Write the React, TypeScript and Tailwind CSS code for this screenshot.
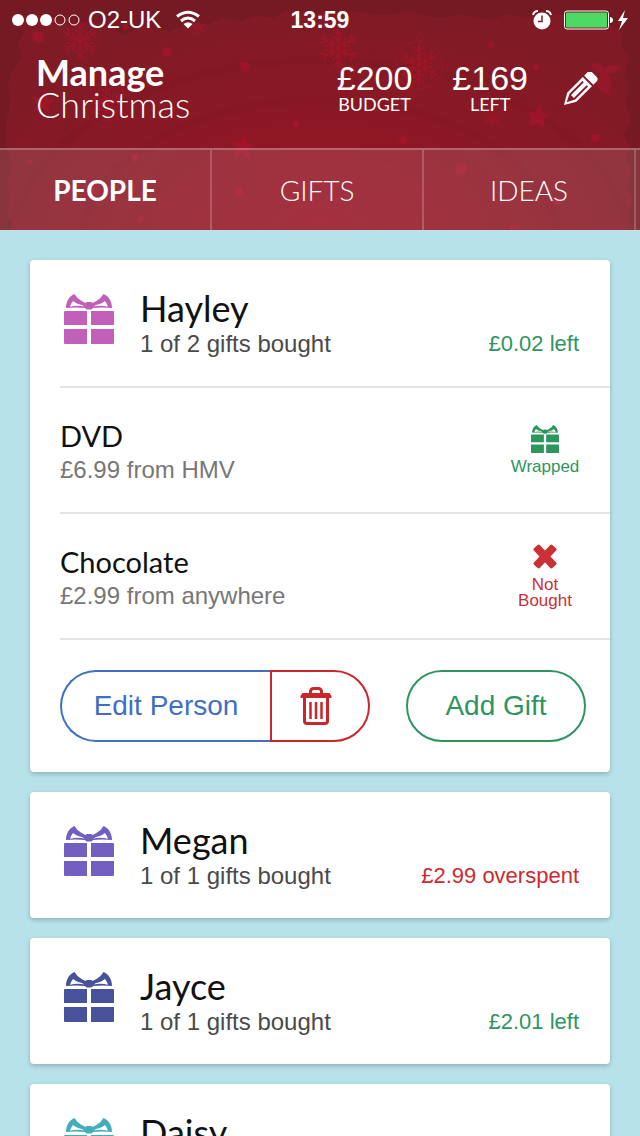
import type { ReactNode } from "react";
import { clsx } from "clsx";

type Gift = {
  title: string;
  detail: string;
  wrapped: boolean;
};

type Person = {
  name: string;
  summary: string;
  balance: string;
  overspent?: boolean;
  color: string;
  gifts?: Gift[];
};

const people: Person[] = [
  {
    name: "Hayley",
    summary: "1 of 2 gifts bought",
    balance: "£0.02 left",
    color: "text-[#c15fb9]",
    gifts: [
      { title: "DVD", detail: "£6.99 from HMV", wrapped: true },
      { title: "Chocolate", detail: "£2.99 from anywhere", wrapped: false }
    ]
  },
  {
    name: "Megan",
    summary: "1 of 1 gifts bought",
    balance: "£2.99 overspent",
    overspent: true,
    color: "text-[#735fc1]"
  },
  { name: "Jayce", summary: "1 of 1 gifts bought", balance: "£2.01 left", color: "text-[#47529b]" },
  { name: "Daisy", summary: "1 of 1 gifts bought", balance: "£4.00 left", color: "text-[#44adbb]" }
];

const tabs = ["PEOPLE", "GIFTS", "IDEAS"];

const dots = [
  [38, 37, 6], [167, 52, 5], [245, 67, 5], [296, 124, 3], [126, 27, 3], [491, 45, 3],
  [536, 67, 3], [403, 140, 4], [595, 138, 4], [30, 162, 2], [135, 157, 4], [94, 190, 6],
  [239, 192, 4], [141, 219, 3], [461, 169, 6], [389, 168, 2], [557, 201, 4], [515, 230, 6]
];

const flakes = [
  [80, 41, 19], [338, 48, 20], [198, 28, 8], [492, 118, 8], [106, 105, 18], [419, 65, 20], [55, 236, 10]
];

const stars = [[243, 147], [538, 117], [43, 102]];

function GiftIcon({ className }: { className?: string }) {
  return (
    <svg viewBox="0 0 50 50" fill="currentColor" className={className} aria-hidden="true">
      <path d="M1 17h22v14H0V18a1 1 0 0 1 1-1zM27 17h22a1 1 0 0 1 1 1v13H27zM0 35h23v15H1a1 1 0 0 1-1-1zM27 35h23v14a1 1 0 0 1-1 1H27z" />
      <path
        fillRule="evenodd"
        d="M2 14C2 8 5 2 10.500 0L13.500 4Q17 7 21.500 9 22 8 23.500 8h3Q28 8 28.500 9 33 7 36.500 4L39.500 0C45 2 48 8 48 14Q38 13 29 14 28 15.500 26.500 15.500h-3Q22 15.500 21 14 12 13 2 14zM9 7Q7 9.500 6 12.800 13 11 20.500 12.500 18 10.500 15 10.200 12 9.500 9 7zM41 7Q38 9.500 35 10.200 32 10.500 29.500 12.500 37 11 44 12.800 43 9.500 41 7z"
      />
    </svg>
  );
}

function CrossIcon() {
  return (
    <svg viewBox="0 0 28 28" fill="currentColor" className="size-7" aria-hidden="true">
      <rect x="0.500" y="9.500" width="27" height="8" rx="1.500" transform="rotate(47 14 13.500)" />
      <rect x="0.500" y="9.500" width="27" height="8" rx="1.500" transform="rotate(-47 14 13.500)" />
    </svg>
  );
}

function TrashIcon() {
  return (
    <svg viewBox="0 0 32 38" fill="none" stroke="currentColor" className="h-[38px] w-8" aria-hidden="true">
      <path d="M10.500 7V4.500a3 3 0 0 1 3-3h5a3 3 0 0 1 3 3V7" strokeWidth="3" />
      <path d="M2.500 6h27l2 3v2H.500V9z" fill="currentColor" stroke="none" />
      <path d="M4.500 10v24a2.500 2.500 0 0 0 2.500 2.500h18a2.500 2.500 0 0 0 2.500-2.500V10" strokeWidth="3" />
      <path d="M10.500 15v17M16 15v17M21.500 15v17" strokeWidth="2.500" />
    </svg>
  );
}

function PencilIcon() {
  return (
    <svg viewBox="0 0 34 34" className="size-[34px]" aria-hidden="true">
      <g transform="translate(0 33) rotate(-45)">
        <path d="M0 0 11-6.500H33V6.500H11z" fill="#fff" />
        <path d="M35-6.500H39Q43-6.500 43-3V3Q43 6.500 39 6.500H35z" fill="#fff" />
        <path d="M30-3H12L6 0 12 3H30" fill="none" stroke="#841924" strokeWidth="2" />
        <path d="M6.500 0 12-3V3z" fill="#841924" />
      </g>
    </svg>
  );
}

// Festive backdrop behind the status bar, title and tabs
function Backdrop() {
  return (
    <svg
      viewBox="0 0 640 230"
      preserveAspectRatio="xMidYMid slice"
      className="absolute inset-0 size-full"
      aria-hidden="true"
    >
      <path
        d="M0 0H640V230H632L628 214 633 200 627 186 632 170 626 158 630 146 624 134 631 120 626 104 629 88 624 74 630 56 620 44 622 32 604 22 580 20 560 14 530 18 508 14 490 20 462 14 440 18 410 12 380 15 350 11 320 13 290 10 272 18 260 15 240 21 222 18 208 24 190 22 170 32 160 28 140 27 122 36 112 26 90 21 70 24 50 16 30 14 16 22 24 32 18 42 22 56 14 68 8 84 10 104 6 122 6 146 12 164 8 180 9 200 7 214 12 222 10 230H0z"
        fill="#641720"
        fillOpacity="0.38"
      />
      <g fill="none" stroke="#4d0d16" strokeOpacity="0.03" strokeWidth="8">
        <ellipse cx="320" cy="250" rx="240" ry="150" />
        <ellipse cx="320" cy="250" rx="310" ry="190" />
      </g>
      <g fill="#b3132d" fillOpacity="0.55">
        {dots.map(([x, y, r]) => (
          <circle key={`${x}-${y}`} cx={x} cy={y} r={r} />
        ))}
        {stars.map(([x, y]) => (
          <path
            key={`${x}-${y}`}
            transform={`translate(${x} ${y}) rotate(8)`}
            d="M0-13 4-4 12-4 6 2 8 11 0 6-8 11-6 2-12-4-4-4z"
          />
        ))}
        <path
          d="M591 64Q599 61 605 68 611 61 621 68 617 74 608 73 612 84 611 95 604 97 598 87L595 80Q602 77 600 73 593 72 591 64z"
          fillOpacity="0.4"
        />
      </g>
      <g fill="none" stroke="#b3132d" strokeOpacity="0.45">
        {flakes.map(([x, y, r]) => (
          <g key={`${x}-${y}`} transform={`translate(${x} ${y}) scale(${r / 20})`} strokeWidth="2">
            {[0, 60, 120, 180, 240, 300].map((angle) => (
              <path
                key={angle}
                transform={`rotate(${angle})`}
                d="M0 0V-20M-5-18 0-13 5-18M-5-12 0-7 5-12M-3-5 0-8 3-5"
              />
            ))}
          </g>
        ))}
        <circle cx="106" cy="105" r="22" />
        <circle cx="419" cy="65" r="24" />
        <circle cx="420" cy="38" r="3" />
      </g>
    </svg>
  );
}

function StatusBar() {
  return (
    <div className="relative grid h-10 grid-cols-3 items-center px-3">
      <div className="flex items-center">
        <svg viewBox="0 0 68 12" className="mr-2 h-3 w-[68px]" aria-hidden="true">
          <g fill="#fff">
            <circle cx="6" cy="6" r="6" />
            <circle cx="20" cy="6" r="6" />
            <circle cx="34" cy="6" r="6" />
          </g>
          <g fill="none" stroke="#fff">
            <circle cx="48" cy="6" r="5" />
            <circle cx="62" cy="6" r="5" />
          </g>
        </svg>
        <span className="text-2xl">O2-UK</span>
        <svg viewBox="0 0 26 20" className="ml-[14px] h-5 w-[26px]" aria-hidden="true">
          <path d="M2 6.500Q13-2 24 6.500M6 11Q13 5 20 11" fill="none" stroke="#fff" strokeWidth="3" />
          <path d="M8.500 14Q13 10.500 17.500 14L13 18.500z" fill="#fff" />
        </svg>
      </div>
      <span className="text-center text-[23px] font-bold">13:59</span>
      <div className="flex items-center justify-end">
        <svg viewBox="0 0 20 20" className="mr-3 size-5" aria-hidden="true">
          <circle cx="10" cy="11" r="8.500" fill="#fff" />
          <path d="M1 5Q2 1 6 1M19 5Q18 1 14 1" fill="none" stroke="#fff" strokeWidth="2" />
          <path d="M10 5.500V11.500H6" fill="none" stroke="#7d1a24" strokeWidth="1.500" />
        </svg>
        <svg viewBox="0 0 64 20" className="h-5 w-16" aria-hidden="true">
          <rect x=".500" y="1" width="44" height="18" rx="2.500" fill="none" stroke="#fff" />
          <rect x="2" y="2.500" width="41" height="15" rx="1" fill="#4cd964" />
          <path d="M46 7q3 .500 3 3t-3 3z" fill="#fff" />
          <path d="M61 0 54 11h4l-3 9 9-12h-5z" fill="#fff" />
        </svg>
      </div>
    </div>
  );
}

function Stat({ value, label }: { value: string; label: string }) {
  return (
    <div className="flex flex-col items-center">
      <span className="text-[34px] leading-9">{value}</span>
      <span className="font-['Lato',sans-serif] text-lg leading-4">{label}</span>
    </div>
  );
}

function GiftRow({ gift }: { gift: Gift }) {
  return (
    <li className="ml-[30px] flex items-center justify-between border-t-2 border-[#e3e3e3] pr-[30px]">
      <div className="pt-8 pb-7">
        <h3 className="font-['Lato',sans-serif] text-[29px] leading-8 text-[#111]">{gift.title}</h3>
        <p className="mt-1 text-2xl leading-7 text-[#777]">{gift.detail}</p>
      </div>
      <div
        className={clsx(
          "flex w-[70px] flex-col items-center gap-[6px] text-center text-[17px] leading-4",
          gift.wrapped ? "text-[#2f955f]" : "text-[#cb3036]"
        )}
      >
        {gift.wrapped ? <GiftIcon className="size-7" /> : <CrossIcon />}
        <span>{gift.wrapped ? "Wrapped" : "Not Bought"}</span>
      </div>
    </li>
  );
}

function Card({ children }: { children: ReactNode }) {
  return (
    <article className="shrink-0 rounded bg-white shadow-[0_2px_5px_rgba(0,0,0,0.22)]">{children}</article>
  );
}

function PersonCard({ person }: { person: Person }) {
  return (
    <Card>
      <div className="flex items-start pr-[31px] pl-[34px] pt-[30px] pb-7">
        <GiftIcon className={clsx("mt-1 mr-[26px] size-[50px]", person.color)} />
        <div className="flex flex-1 items-end justify-between">
          <div>
            <h2 className="font-['Lato',sans-serif] text-[36px] leading-9 text-[#111]">{person.name}</h2>
            <p className="mt-1 text-2xl leading-7 text-[#4a4a4a]">{person.summary}</p>
          </div>
          <p className={clsx("text-[22px] leading-7", person.overspent ? "text-[#cb2a30]" : "text-[#2f955f]")}>
            {person.balance}
          </p>
        </div>
      </div>

      {person.gifts && (
        <>
          <ul>
            {person.gifts.map((gift) => (
              <GiftRow key={gift.title} gift={gift} />
            ))}
          </ul>
          <div className="ml-[30px] flex justify-between border-t-2 border-[#e3e3e3] py-[30px] pr-6 text-[28px]">
            <div className="flex h-[72px]">
              <button className="w-[210px] rounded-l-full border-2 border-r-0 border-[#3f6fc2] text-[#3f6fc2]">
                Edit Person
              </button>
              <button
                aria-label="Delete person"
                className="flex w-[100px] items-center justify-center rounded-r-full border-2 border-[#ca272c] pr-2 text-[#ca272c]"
              >
                <TrashIcon />
              </button>
            </div>
            <button className="h-[72px] w-[180px] rounded-full border-2 border-[#2f955f] text-[#2f955f]">
              Add Gift
            </button>
          </div>
        </>
      )}
    </Card>
  );
}

export default function App() {
  return (
    <div className="flex h-screen flex-col bg-[#b8e2ea] font-['Liberation_Sans',sans-serif]">
      <header className="relative shrink-0 bg-[radial-gradient(ellipse_60%_95%_at_50%_100%,#9a1424,#801b25)] text-white">
        <Backdrop />
        <StatusBar />
        <div className="relative flex h-[108px] items-start justify-between pt-4 pr-[42px] pl-9">
          <h1 className="font-['Lato',sans-serif] text-[36px] leading-8">
            <strong className="block font-bold">Manage</strong>
            <span className="block font-light">Christmas</span>
          </h1>
          <div className="flex items-start gap-10 pt-1">
            <Stat value="£200" label="BUDGET" />
            <Stat value="£169" label="LEFT" />
            <button aria-label="Edit budget" className="-ml-1 pt-3">
              <PencilIcon />
            </button>
          </div>
        </div>
        <nav className="relative grid grid-cols-3 border-t-2 border-white/25 bg-white/12 pr-1">
          {tabs.map((tab, i) => (
            <a
              key={tab}
              href={`#${tab.toLowerCase()}`}
              aria-current={i === 0 ? "page" : undefined}
              className={clsx(
                "flex h-20 items-center justify-center border-r-2 border-white/20 font-['Lato',sans-serif] text-[28px]",
                i === 0 ? "font-bold" : "font-light"
              )}
            >
              {tab}
            </a>
          ))}
        </nav>
      </header>

      <main className="flex flex-1 flex-col gap-5 overflow-y-auto p-[30px] [scrollbar-width:none]">
        {people.map((person) => (
          <PersonCard key={person.name} person={person} />
        ))}
      </main>
    </div>
  );
}
